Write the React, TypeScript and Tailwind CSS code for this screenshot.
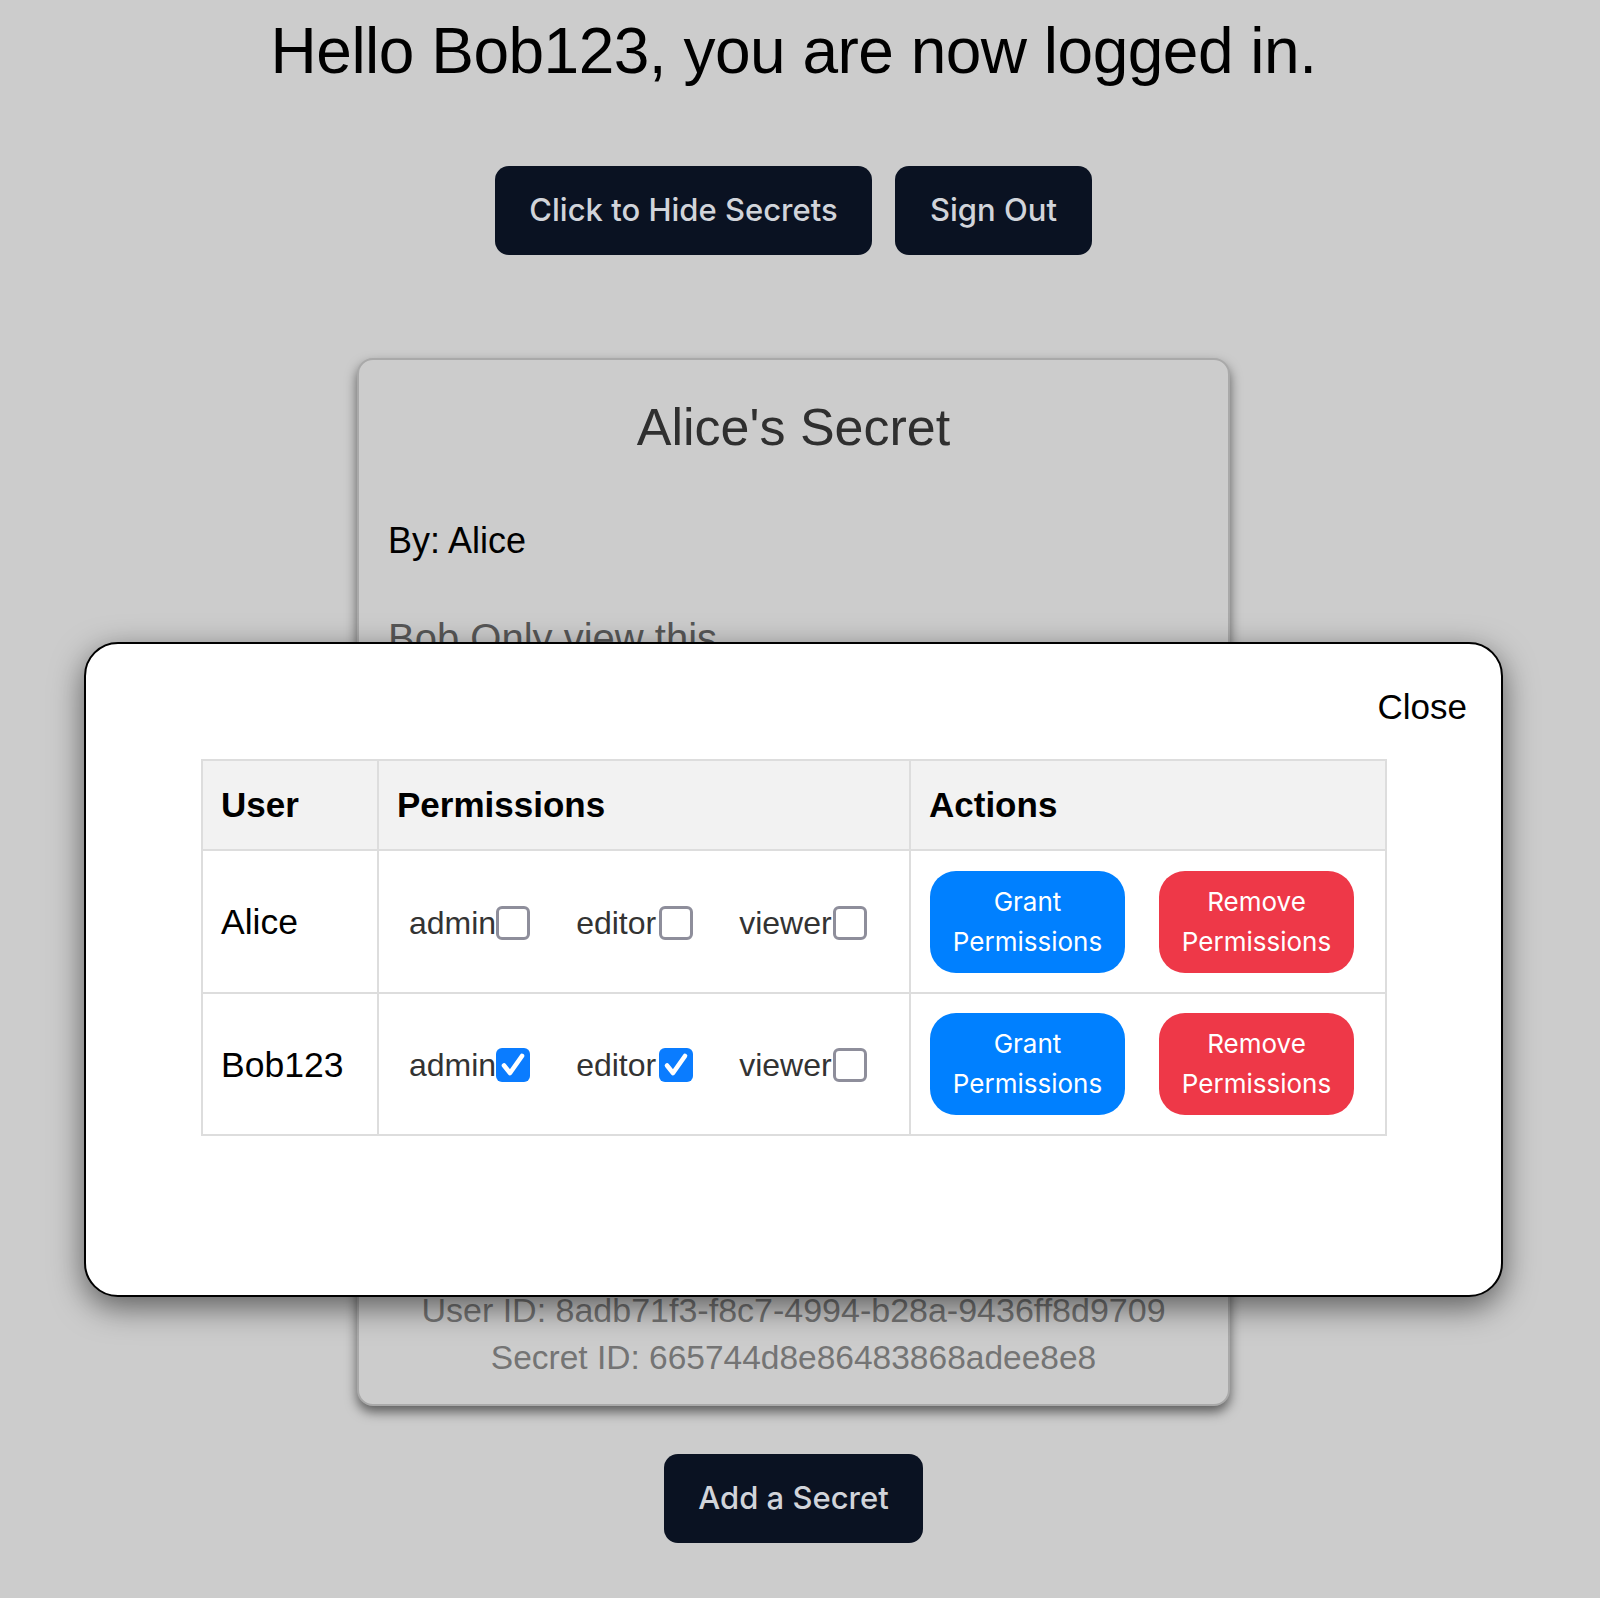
import React from 'react';

type Perms = { admin: boolean; editor: boolean; viewer: boolean };

const users: { name: string; perms: Perms; rowH: string }[] = [
  { name: 'Alice', perms: { admin: false, editor: false, viewer: false }, rowH: 'h-[143px]' },
  { name: 'Bob123', perms: { admin: true, editor: true, viewer: false }, rowH: 'h-[142px]' },
];

const Checkbox: React.FC<{ checked: boolean }> = ({ checked }) =>
  checked ? (
    <span className="flex h-[34px] w-[34px] items-center justify-center rounded-[6px] bg-[#0a7cff]">
      <svg width="28" height="28" viewBox="0 0 28 28" fill="none">
        <path d="M5 14.5 L11 22 L23 5" stroke="white" strokeWidth="4.6" strokeLinecap="round" strokeLinejoin="round" />
      </svg>
    </span>
  ) : (
    <span className="block h-[34px] w-[34px] rounded-[6px] border-[3.5px] border-[#8e8e9b] bg-white" />
  );

const DarkButton: React.FC<{ label: string; width: string }> = ({ label, width }) => (
  <button
    className={`${width} h-[89px] rounded-[14px] bg-[#0a1222] text-center font-[Inter,sans-serif] text-[31px] font-medium text-[#d1d4da]`}
  >
    {label}
  </button>
);

export default function App() {
  return (
    <div className="relative min-h-screen bg-[#cccccc] font-[Liberation_Sans,Arial,sans-serif]">
      <div className="flex w-[1587px] flex-col items-center pt-[14px] pb-[55px]">
        <h1 className="text-[64px] leading-[74px] tracking-[-0.5px] text-black">
          Hello Bob123, you are now logged in.
        </h1>

        <div className="mt-[78px] flex gap-[23px]">
          <DarkButton label="Click to Hide Secrets" width="w-[377px]" />
          <DarkButton label="Sign Out" width="w-[197px]" />
        </div>

        {/* secret card */}
        <div className="mt-[103px] flex h-[1048px] w-[873px] flex-col rounded-[16px] border-2 border-[#a9a9a9] bg-[#cccccc] px-[29px] pt-[37px] pb-[23px] shadow-[0_6px_12px_rgba(0,0,0,0.55)]">
          <h2 className="text-center text-[52px] leading-[60px] text-[#2f2f2f]">Alice's Secret</h2>
          <p className="mt-[64px] text-[36px] leading-[40px] text-black">By: Alice</p>
          <p className="mt-[54px] text-[40px] leading-[46px] text-[#575757]">Bob Only view this</p>
          <div className="flex-1" />
          <p className="text-center text-[34px] leading-[47px] text-[#747474]">
            User ID: 8adb71f3-f8c7-4994-b28a-9436ff8d9709
          </p>
          <p className="text-center text-[33.5px] leading-[47px] text-[#747474]">
            Secret ID: 665744d8e86483868adee8e8
          </p>
        </div>

        <div className="mt-[48px]">
          <DarkButton label="Add a Secret" width="w-[259px]" />
        </div>
      </div>

      {/* permissions modal */}
      <div className="absolute left-[84px] top-[642px] h-[655px] w-[1419px] rounded-[34px] border-2 border-black bg-white pt-[43px] shadow-[0_10px_32px_rgba(0,0,0,0.55)]">
        <div className="flex justify-end pr-[34px]">
          <button className="text-[35px] leading-[40px] text-black">Close</button>
        </div>

        <div className="mt-[32px] pl-[115px]">
          <div className="grid w-fit grid-cols-[176px_532px_476px] border-l-2 border-t-2 border-[#dddddd]">
            <div className="flex h-[90px] items-center border-r-2 border-b-2 border-[#dddddd] bg-[#f2f2f2] pl-[18px] text-[35px] font-bold text-black">
              User
            </div>
            <div className="flex h-[90px] items-center border-r-2 border-b-2 border-[#dddddd] bg-[#f2f2f2] pl-[18px] text-[35px] font-bold text-black">
              Permissions
            </div>
            <div className="flex h-[90px] items-center border-r-2 border-b-2 border-[#dddddd] bg-[#f2f2f2] pl-[18px] text-[35px] font-bold text-black">
              Actions
            </div>

            {users.map((u) => (
              <React.Fragment key={u.name}>
                <div className={`flex ${u.rowH} items-center border-r-2 border-b-2 border-[#dddddd] pl-[18px] pt-[3px] text-[35.5px] text-black`}>
                  {u.name}
                </div>
                <div className={`flex ${u.rowH} items-center border-r-2 border-b-2 border-[#dddddd] pl-[30px] pt-[2px] text-[32px] text-[#333333]`}>
                  <label className="flex items-center">
                    <span>admin</span>
                    <Checkbox checked={u.perms.admin} />
                  </label>
                  <label className="ml-[46px] flex items-center">
                    <span className="pr-[3px]">editor</span>
                    <Checkbox checked={u.perms.editor} />
                  </label>
                  <label className="ml-[46px] flex items-center">
                    <span className="pr-[1px]">viewer</span>
                    <Checkbox checked={u.perms.viewer} />
                  </label>
                </div>
                <div className={`flex ${u.rowH} items-center gap-[34px] border-r-2 border-b-2 border-[#dddddd] pl-[19px]`}>
                  <button className="h-[102px] w-[195px] rounded-[26px] bg-[#0080ff] font-[Inter,sans-serif] text-[26px] leading-[40px] text-white">
                    Grant
                    <br />
                    Permissions
                  </button>
                  <button className="h-[102px] w-[195px] rounded-[26px] bg-[#ee3848] font-[Inter,sans-serif] text-[26px] leading-[40px] text-white">
                    Remove
                    <br />
                    Permissions
                  </button>
                </div>
              </React.Fragment>
            ))}
          </div>
        </div>
      </div>
    </div>
  );
}
